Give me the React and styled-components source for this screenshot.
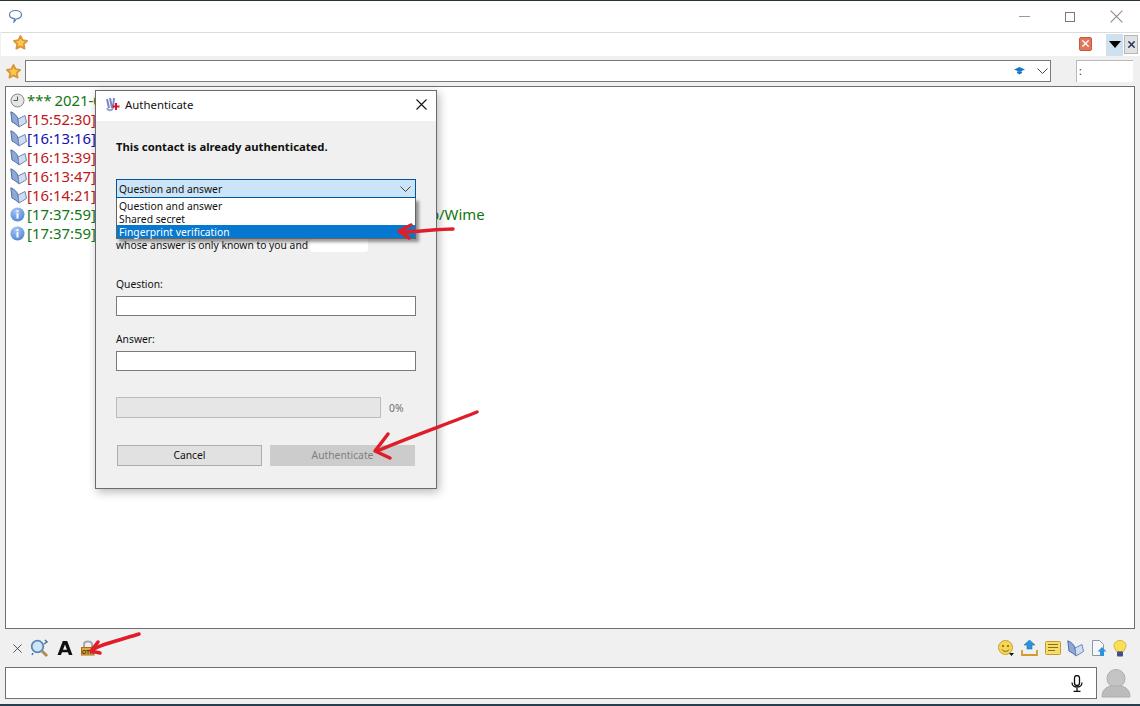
import styled, { createGlobalStyle } from "styled-components";

const GlobalStyle = createGlobalStyle`
  html, body {
    margin: 0;
    padding: 0;
    background: #f0f0f0;
    overflow: hidden;
  }
  * {
    box-sizing: border-box;
  }
`;

const Window = styled.div`
  position: relative;
  width: 1140px;
  height: 706px;
  display: flex;
  flex-direction: column;
  background: #f0f0f0;
  border-top: 1px solid #27343b;
  border-bottom: 2px solid #27404f;
  font-family: "Noto Sans", "Liberation Sans", sans-serif;
  overflow: hidden;
`;

const TitleBar = styled.div`
  height: 31px;
  flex: none;
  background: #fff;
  display: flex;
  align-items: center;
  padding-left: 8px;
`;

const WindowControls = styled.div`
  margin-left: auto;
  display: flex;
  align-items: center;
  gap: 35px;
  padding-right: 17px;
  color: #8a8a8a;
`;

const TabBar = styled.div`
  height: 24px;
  flex: none;
  margin-left: 1px;
  background: #fff;
  border-top: 1px solid #dcdcdc;
  display: flex;
  align-items: center;
  padding: 0 2px 4px 11px;
`;

const TabActions = styled.div`
  margin-left: auto;
  display: flex;
  align-items: center;
  margin-bottom: -4px;
`;

const CloseTag = styled.div`
  width: 13px;
  height: 14px;
  margin: 0 14px 2px 0;
  border-radius: 2px;
  background: #e2765c;
  border: 1px solid #c8593f;
  display: flex;
  align-items: center;
  justify-content: center;
`;

const DropTab = styled.div`
  width: 17px;
  height: 22px;
  background: #cfe0ee;
  display: flex;
  align-items: center;
  justify-content: center;
`;

const Triangle = styled.div`
  width: 0;
  height: 0;
  border-left: 6px solid transparent;
  border-right: 6px solid transparent;
  border-top: 7px solid #000;
`;

const SmallClose = styled.div`
  width: 14px;
  height: 19px;
  margin-left: 1px;
  background: #dfe3e6;
  border: 1px solid #b4b8bb;
  display: flex;
  align-items: center;
  justify-content: center;
`;

const AddressRow = styled.div`
  height: 30px;
  flex: none;
  display: flex;
  align-items: center;
  padding: 1px 7px 1px 5px;
`;

const AddressField = styled.div`
  width: 1026px;
  height: 22px;
  margin-left: 3px;
  background: #fff;
  border: 1px solid #7a7a7a;
  display: flex;
  align-items: center;
  justify-content: flex-end;
  padding-right: 2px;
  gap: 12px;
`;

const CountBox = styled.div`
  width: 57px;
  height: 22px;
  margin-left: auto;
  background: #fff;
  border-top: 1px solid #b9b9b9;
  border-left: 1px solid #b9b9b9;
  font-size: 10px;
  line-height: 20px;
  padding-left: 2px;
  color: #222;
`;

const LogPane = styled.div`
  flex: 1;
  margin: 0 5px;
  background: #fff;
  border: 1px solid #6f6f6f;
  padding: 4px 0 0 4px;
`;

const LogRow = styled.div`
  height: 19px;
  display: flex;
  align-items: center;
  font-size: 14.9px;
  line-height: 19px;
  word-spacing: -1px;
  white-space: nowrap;
  color: ${(p) => p.$color};
`;

const LogIcon = styled.span`
  width: 17px;
  height: 19px;
  flex: none;
  display: flex;
  align-items: center;
`;

const TrailText = styled.span`
  margin-left: 334px;
`;

const ToolBar = styled.div`
  height: 38px;
  flex: none;
  display: flex;
  align-items: center;
  padding: 0 13px;
`;

const ToolGroup = styled.div`
  display: flex;
  align-items: center;
  gap: ${(p) => p.$gap}px;
  margin-left: ${(p) => (p.$end ? "auto" : "0")};
`;

const ComposeRow = styled.div`
  height: 32px;
  flex: none;
  display: flex;
  align-items: stretch;
  padding: 0 7px 0 5px;
  margin-bottom: 5px;
`;

const ComposeField = styled.div`
  width: 1092px;
  background: #fff;
  border: 1px solid #6f6f6f;
  display: flex;
  align-items: center;
  justify-content: flex-end;
  padding-right: 13px;
`;

const AvatarSlot = styled.div`
  margin-left: 4px;
  display: flex;
  align-items: center;
`;

const Dialog = styled.div`
  position: absolute;
  left: 95px;
  top: 89px;
  width: 342px;
  height: 399px;
  background: #f0f0f0;
  border: 1px solid #6b6b6b;
  box-shadow: 2px 3px 9px rgba(0, 0, 0, 0.28);
  font-size: 10.3px;
  color: #111;
  display: flex;
  flex-direction: column;
`;

const DialogTitle = styled.div`
  height: 30px;
  flex: none;
  background: #fff;
  display: flex;
  align-items: center;
  padding: 0 9px 4px 8px;
  gap: 5px;
  font-size: 11.4px;
`;

const DialogClose = styled.div`
  margin-left: auto;
  display: flex;
`;

const DialogBody = styled.div`
  position: relative;
  flex: 1;
  padding: 18px 20px 0;
  display: flex;
  flex-direction: column;
`;

const Notice = styled.div`
  height: 16px;
  font-size: 11.3px;
  font-weight: 700;
  line-height: 16px;
`;

const Combo = styled.div`
  height: 19px;
  margin-top: 24px;
  background: #cce4f7;
  border: 1px solid #005499;
  display: flex;
  align-items: center;
  justify-content: space-between;
  padding: 1px 4px 0 2px;
`;

const ComboList = styled.div`
  position: absolute;
  left: 20px;
  top: 77px;
  width: 300px;
  height: 41px;
  background: #fff;
  border: 1px solid #646464;
  border-top: none;
  box-shadow: 3px 3px 3px rgba(0, 0, 0, 0.4);
  padding-top: 1px;
`;

const ComboItem = styled.div`
  height: 13px;
  line-height: 14px;
  padding-left: 2px;
  background: ${(p) => (p.$active ? "#0678d0" : "transparent")};
  color: ${(p) => (p.$active ? "#fff" : "#111")};
`;

const Hint = styled.div`
  margin-top: 40px;
  height: 14px;
  line-height: 14px;
  display: flex;
  align-items: center;
  white-space: nowrap;
`;

const HintSmear = styled.span`
  width: 58px;
  height: 13px;
  margin-left: 2px;
  background: #fff;
  border-radius: 3px;
`;

const FieldLabel = styled.div`
  margin-top: ${(p) => p.$top}px;
  height: 14px;
  line-height: 14px;
`;

const TextBox = styled.div`
  height: 20px;
  margin-top: 5px;
  background: #fff;
  border: 1px solid #7a7a7a;
`;

const ProgressRow = styled.div`
  margin-top: 26px;
  display: flex;
  align-items: center;
  gap: 8px;
  color: #6d6d6d;
`;

const Progress = styled.div`
  width: 265px;
  height: 21px;
  background: #e6e6e6;
  border: 1px solid #bcbcbc;
`;

const ButtonRow = styled.div`
  margin-top: 27px;
  padding-left: 1px;
  display: flex;
  gap: 8px;
`;

const DialogButton = styled.div`
  width: 145px;
  height: 21px;
  line-height: 19px;
  text-align: center;
  background: ${(p) => (p.$disabled ? "#cccccc" : "#e1e1e1")};
  border: 1px solid ${(p) => (p.$disabled ? "#cccccc" : "#adadad")};
  color: ${(p) => (p.$disabled ? "#808080" : "#111")};
`;

const Annotation = styled.svg`
  position: absolute;
  left: 0;
  top: 0;
  pointer-events: none;
`;

const Star = ({ size = 17 }) => (
  <svg width={size} height={size} viewBox="0 0 17 17">
    <path
      d="M8.5 2l2 4.200 4.600.6-3.300 3.200.8 4.600-4.100-2.200-4.100 2.200.8-4.600L1.900 6.800l4.600-.6z"
      fill="#fbc94c"
      stroke="#dc963a"
      strokeWidth="1.800"
      strokeLinejoin="round"
    />
  </svg>
);

const Bubble = () => (
  <svg width="15" height="15" viewBox="0 0 15 15" fill="none">
    <path
      d="M7.500 1.500c3.300 0 6 1.700 6 4.300 0 2.500-2.700 4.200-5.500 4.200-.4 1-1.200 2.500-2 3 .3-1 .4-2.200.3-3.300C3.500 9.300 1.500 7.800 1.500 5.800c0-2.600 2.700-4.300 6-4.300z"
      stroke="#4f7fae"
      strokeWidth="1.200"
    />
  </svg>
);

const Book = () => (
  <svg width="17" height="17" viewBox="0 0 17 17">
    <path d="M.8.800C4 2 7 4.500 8 8l1 8C6.500 13.500 4 12 2 11z" fill="#8fa9d6" stroke="#4a6aa5" />
    <path d="M8 8l7-3.500 1.500 7L9 16z" fill="#d0ddf0" stroke="#6c86b8" />
  </svg>
);

const Clock = () => (
  <svg width="15" height="15" viewBox="0 0 15 15" fill="none">
    <circle cx="7.500" cy="7.500" r="6.500" fill="#e6e6e6" stroke="#8a8a8a" />
    <path d="M7.500 3.500v4H3.500" stroke="#555" />
  </svg>
);

const Info = () => (
  <svg width="15" height="15" viewBox="0 0 15 15">
    <defs>
      <radialGradient id="infoFill" cx="0.4" cy="0.25" r="0.8">
        <stop offset="0" stopColor="#a6c8f2" />
        <stop offset="1" stopColor="#4f84d4" />
      </radialGradient>
    </defs>
    <circle cx="7.500" cy="7.500" r="7" fill="url(#infoFill)" />
    <rect x="6.500" y="6.200" width="2" height="5.300" fill="#fff" />
    <rect x="6.500" y="3.200" width="2" height="2" fill="#fff" />
  </svg>
);

const KeyIcon = () => (
  <svg width="16" height="16" viewBox="0 0 16 16">
    <path d="M3 3l2 9M6 2l2 10M10 2L9 12" stroke="#7d86c4" strokeWidth="2" fill="none" />
    <path d="M3 12c1 3 5 3 6 0" stroke="#9aa0d0" strokeWidth="2" fill="none" />
    <path d="M11 7v2.500H8.500v2H11V14h2v-2.500h2.500v-2H13V7z" fill="#d8142a" />
  </svg>
);

const Cross = ({ size = 11, color = "#222", width = 1.1 }) => (
  <svg width={size} height={size} viewBox="0 0 11 11">
    <path d="M.5.500l10 10M10.500.500l-10 10" stroke={color} strokeWidth={width} fill="none" />
  </svg>
);

const Chevron = ({ color = "#444" }) => (
  <svg width="11" height="6" viewBox="0 0 11 6" fill="none">
    <path d="M.5.500L5.500 5.500l5-5" stroke={color} />
  </svg>
);

const Minimize = () => (
  <svg width="11" height="11" viewBox="0 0 11 11">
    <path d="M0 5.500h11" stroke="#9a9a9a" />
  </svg>
);

const Maximize = () => (
  <svg width="10" height="10" viewBox="0 0 10 10" fill="none">
    <rect x=".5" y=".5" width="9" height="9" stroke="#7a7a7a" />
  </svg>
);

const CapIcon = () => (
  <svg width="11" height="8" viewBox="0 0 11 8">
    <path d="M0 2.500L5.500 0 11 2.500 5.500 5z" fill="#1a78c8" />
    <path d="M3 4.500h5V6L5.500 7.500 3 6z" fill="#1a78c8" />
  </svg>
);

const Magnifier = () => (
  <svg width="19" height="19" viewBox="0 0 19 19" fill="none">
    <circle cx="7.500" cy="7.500" r="5.800" fill="#cfe6f8" stroke="#5a87b5" strokeWidth="1.800" />
    <path d="M12 12l5 5" stroke="#b08a50" strokeWidth="2.800" />
    <path d="M15 1l2 2-3 2M2 16l1-2" stroke="#4d6f9a" strokeWidth="1.500" />
  </svg>
);

const FontIcon = () => (
  <svg width="16" height="16" viewBox="0 0 16 16">
    <path d="M5.800 1h4.400L15.500 15h-3.600l-1-2.800H5L4 15H.5zM8 4.500L6 9.800h4z" fill="#111" fillRule="evenodd" />
  </svg>
);

const OtrLock = () => (
  <svg width="14" height="16" viewBox="0 0 14 16" fill="none">
    <path d="M3 8V4.500C3 2.500 4.800 1.500 7 1.500s4 1 4 3V8" stroke="#a7a7a7" strokeWidth="2" />
    <rect x=".5" y="7.500" width="12.500" height="7.500" fill="#e4a53a" stroke="#a8701c" />
    <text x="1" y="13.500" fontSize="5.500" fontWeight="700" fontFamily="Liberation Sans, sans-serif" fill="#40280a">OTR</text>
  </svg>
);

const Smiley = () => (
  <svg width="17" height="17" viewBox="0 0 17 17">
    <circle cx="7.500" cy="7.500" r="7" fill="#f6d652" stroke="#c9a132" />
    <circle cx="5" cy="6" r="1" fill="#7b5a12" />
    <circle cx="10" cy="6" r="1" fill="#7b5a12" />
    <path d="M4 9.500c1.500 2.500 5.500 2.500 7 0" stroke="#7b5a12" fill="none" />
    <path d="M11 13h5l-2.500 3z" fill="#111" />
  </svg>
);

const Upload = () => (
  <svg width="17" height="16" viewBox="0 0 17 16">
    <path d="M8.500 0L14 5h-3v4H6V5H3z" fill="#2f93dc" stroke="#1f6fb0" strokeWidth=".6" />
    <path d="M1 10v5h15v-5" fill="none" stroke="#d49a2e" strokeWidth="1.800" />
  </svg>
);

const Note = () => (
  <svg width="16" height="14" viewBox="0 0 16 14">
    <rect x=".5" y=".5" width="15" height="13" rx="1" fill="#f6dc6a" stroke="#c29a30" />
    <path d="M3 3.500h10M3 6.500h10M3 9.500h7" stroke="#8d6f1a" />
  </svg>
);

const FileUp = () => (
  <svg width="16" height="17" viewBox="0 0 16 17">
    <path d="M1.500.500h7l4 4v11h-11z" fill="#f4f6f8" stroke="#8d96a5" />
    <path d="M11 7l4.500 4.500H13V16H9v-4.500H6.500z" fill="#2f93dc" />
  </svg>
);

const Bulb = () => (
  <svg width="14" height="17" viewBox="0 0 14 17">
    <path d="M7 .500c3.500 0 6 2.300 6 5.300 0 2.500-2 3.700-2.500 5.700h-7C3 9.500 1 8.300 1 5.800 1 2.800 3.500.500 7 .500z" fill="#f8e05a" stroke="#d8b52c" />
    <rect x="4" y="11.500" width="6" height="5" rx="1" fill="#454c8e" />
  </svg>
);

const Mic = () => (
  <svg width="12" height="17" viewBox="0 0 12 17" fill="none" stroke="#111">
    <rect x="3.500" y=".5" width="5" height="10" rx="2.500" strokeWidth="1.300" />
    <path d="M1 7.500c0 6 10 6 10 0M6 13v3M2.500 16.500h7" strokeWidth="1.300" />
  </svg>
);

const Avatar = () => (
  <svg width="30" height="30" viewBox="0 0 30 30">
    <circle cx="15" cy="10.500" r="9" fill="#c4c4c4" stroke="#adadad" />
    <path d="M1 29c0-7 4-10 9-11h10c5 1 9 4 9 11z" fill="#bcbcbc" stroke="#adadad" />
  </svg>
);

const logRows = [
  { icon: "clock", color: "#117711", text: "*** 2021-0" },
  { icon: "book", color: "#c01818", text: "[15:52:30]" },
  { icon: "book", color: "#1212b0", text: "[16:13:16]" },
  { icon: "book", color: "#c01818", text: "[16:13:39]" },
  { icon: "book", color: "#c01818", text: "[16:13:47]" },
  { icon: "book", color: "#c01818", text: "[16:14:21]" },
  { icon: "info", color: "#117711", text: "[17:37:59]" },
  { icon: "info", color: "#117711", text: "[17:37:59]" },
];

const logIcons = { clock: <Clock />, book: <Book />, info: <Info /> };

export default function App() {
  return (
    <Window>
      <GlobalStyle />
      <TitleBar>
        <Bubble />
        <WindowControls>
          <Minimize />
          <Maximize />
          <Cross size={13} color="#8a8a8a" width={0.9} />
        </WindowControls>
      </TitleBar>
      <TabBar>
        <Star />
        <TabActions>
          <CloseTag>
            <Cross size={7} color="#fff" width={2} />
          </CloseTag>
          <DropTab>
            <Triangle />
          </DropTab>
          <SmallClose>
            <Cross size={7} color="#25364d" width={2.4} />
          </SmallClose>
        </TabActions>
      </TabBar>
      <AddressRow>
        <Star />
        <AddressField>
          <CapIcon />
          <Chevron />
        </AddressField>
        <CountBox>:</CountBox>
      </AddressRow>
      <LogPane>
        {logRows.map((row, i) => (
          <LogRow key={i} $color={row.color}>
            <LogIcon>{logIcons[row.icon]}</LogIcon>
            {row.text}
            {i === 6 && <TrailText>p/Wime</TrailText>}
          </LogRow>
        ))}
      </LogPane>
      <ToolBar>
        <ToolGroup $gap={8}>
          <Cross size={9} color="#333" width={1} />
          <Magnifier />
          <FontIcon />
          <OtrLock />
        </ToolGroup>
        <ToolGroup $gap={6.5} $end>
          <Smiley />
          <Upload />
          <Note />
          <Book />
          <FileUp />
          <Bulb />
        </ToolGroup>
      </ToolBar>
      <ComposeRow>
        <ComposeField>
          <Mic />
        </ComposeField>
        <AvatarSlot>
          <Avatar />
        </AvatarSlot>
      </ComposeRow>

      <Dialog>
        <DialogTitle>
          <KeyIcon />
          Authenticate
          <DialogClose>
            <Cross size={11} color="#111" />
          </DialogClose>
        </DialogTitle>
        <DialogBody>
          <Notice>This contact is already authenticated.</Notice>
          <Combo>
            Question and answer
            <Chevron />
          </Combo>
          <ComboList>
            <ComboItem>Question and answer</ComboItem>
            <ComboItem>Shared secret</ComboItem>
            <ComboItem $active>Fingerprint verification</ComboItem>
          </ComboList>
          <Hint>
            whose answer is only known to you and
            <HintSmear />
          </Hint>
          <FieldLabel $top={25}>Question:</FieldLabel>
          <TextBox />
          <FieldLabel $top={16}>Answer:</FieldLabel>
          <TextBox />
          <ProgressRow>
            <Progress />
            0%
          </ProgressRow>
          <ButtonRow>
            <DialogButton>Cancel</DialogButton>
            <DialogButton $disabled>Authenticate</DialogButton>
          </ButtonRow>
        </DialogBody>
      </Dialog>

      <Annotation width="1140" height="706" viewBox="0 1 1140 706" fill="none" stroke="#e01e2a" strokeLinecap="round" strokeLinejoin="round">
        <path d="M453 229c-14 0-38 3-52 3" strokeWidth="3.500" />
        <path d="M411 225l-12 6 10 7" strokeWidth="3.500" />
        <path d="M477 412c-30 12-70 26-100 39" strokeWidth="3.500" />
        <path d="M388 434l-13 17 15 7" strokeWidth="3.500" />
        <path d="M139 634c-12 4-34 9-46 15" strokeWidth="3.500" />
        <path d="M98 642l-7 9 9 2" strokeWidth="3.500" />
      </Annotation>
    </Window>
  );
}
